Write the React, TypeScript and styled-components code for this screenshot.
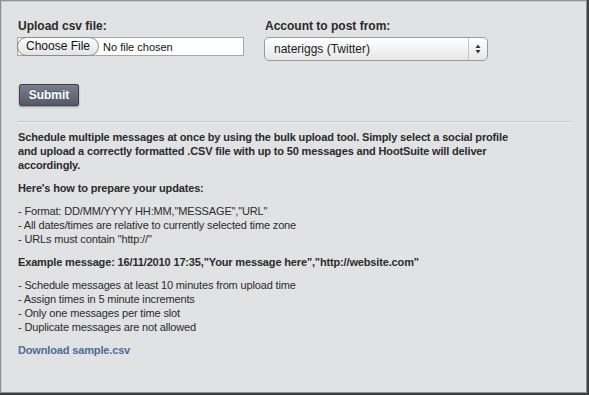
import React, { FC } from 'react';
import styled, { createGlobalStyle } from 'styled-components';

const GlobalStyle = createGlobalStyle`
  html, body {
    margin: 0;
    padding: 0;
    background: #3f3f41;
  }
  body {
    font-family: "Liberation Sans", Arial, Helvetica, sans-serif;
  }
`;

const Panel = styled.div`
  box-sizing: border-box;
  width: 587px;
  height: 393px;
  background: #e1e2e4;
  border: 1px solid #8f9092;
  box-shadow: inset 1px 1px 0 #c9cacc;
  padding: 17px 15px 0 16px;
  color: #2b2b2b;
`;

const FormRow = styled.div`
  display: flex;
  gap: 20px;
`;

const Field = styled.div`
  display: flex;
  flex-direction: column;
`;

const Label = styled.label`
  font-size: 12px;
  font-weight: bold;
  line-height: 16px;
  color: #2a2a2a;
  margin-bottom: 3px;
  margin-left: 1px;
`;

const FileBox = styled.div`
  box-sizing: border-box;
  width: 227px;
  height: 19px;
  display: flex;
  align-items: center;
  background: #fff;
  border: 1px solid #a6a6a6;
`;

const ChooseButton = styled.span`
  box-sizing: border-box;
  height: 19px;
  margin: -1px 0 0 -1px;
  padding: 0 8px;
  display: flex;
  align-items: center;
  border: 1px solid #8c8c8c;
  border-radius: 10px;
  background: linear-gradient(#fdfdfd, #e4e4e4);
  font-size: 12px;
  color: #111;
`;

const FileStatus = styled.span`
  font-size: 11px;
  color: #111;
  margin-left: 4px;
`;

const SelectBox = styled.div`
  box-sizing: border-box;
  width: 224px;
  height: 24px;
  display: flex;
  align-items: center;
  border: 1px solid #9a9a9a;
  border-radius: 5px;
  background: linear-gradient(#ffffff, #f1f1f1 60%, #e6e6e6);
  font-size: 12px;
  color: #1a1a1a;
`;

const SelectText = styled.span`
  flex: 1;
  padding-left: 9px;
`;

const SelectArrows = styled.span`
  width: 18px;
  height: 100%;
  border-left: 1px solid #c4c4c4;
  display: flex;
  align-items: center;
  justify-content: center;
`;

const SubmitButton = styled.button`
  margin: 23px 0 0 2px;
  width: 60px;
  height: 22px;
  border: 1px solid #3f4350;
  border-radius: 2px;
  background: linear-gradient(#7a7f8e, #555a69);
  box-shadow: 0 1px 2px rgba(0, 0, 0, 0.35);
  color: #fff;
  font-family: "Liberation Sans", Arial, sans-serif;
  font-weight: bold;
  font-size: 12px;
  padding: 0;
  text-shadow: 0 -1px 0 rgba(0, 0, 0, 0.3);
`;

const Divider = styled.hr`
  margin: 15px 0 0 0;
  border: none;
  border-top: 1px solid #c6c7c9;
  border-bottom: 1px solid #eeeff0;
  width: 555px;
`;

const Copy = styled.div`
  margin-top: 7px;
  margin-left: 1px;
  width: 505px;
  font-size: 11px;
  line-height: 14px;
  letter-spacing: -0.15px;
`;

const Para = styled.p<{ $bold?: boolean }>`
  margin: 0 0 9px 0;
  font-weight: ${(p) => (p.$bold ? 'bold' : 'normal')};
  color: #2b2b2b;
  white-space: ${(p) => (p.$bold ? 'normal' : 'nowrap')};
`;

const DownloadLink = styled.a`
  display: block;
  font-size: 11px;
  line-height: 14px;
  font-weight: bold;
  color: #4e6b95;
  text-decoration: none;
`;

const Arrows: FC = () => (
  <svg width="6" height="10" viewBox="0 0 6 10">
    <path d="M3 0.5 L5.5 4 H0.5 Z" fill="#333" />
    <path d="M3 9.5 L5.5 6 H0.5 Z" fill="#333" />
  </svg>
);

const App: FC = () => (
  <>
    <GlobalStyle />
    <Panel>
      <FormRow>
        <Field>
          <Label>Upload csv file:</Label>
          <FileBox>
            <ChooseButton>Choose File</ChooseButton>
            <FileStatus>No file chosen</FileStatus>
          </FileBox>
        </Field>
        <Field>
          <Label>Account to post from:</Label>
          <SelectBox>
            <SelectText>nateriggs (Twitter)</SelectText>
            <SelectArrows>
              <Arrows />
            </SelectArrows>
          </SelectBox>
        </Field>
      </FormRow>
      <SubmitButton>Submit</SubmitButton>
      <Divider />
      <Copy>
        <Para $bold>
          Schedule multiple messages at once by using the bulk upload tool. Simply select a social profile
          and upload a correctly formatted .CSV file with up to 50 messages and HootSuite will deliver
          accordingly.
        </Para>
        <Para $bold>Here's how to prepare your updates:</Para>
        <Para>
          - Format: DD/MM/YYYY HH:MM,"MESSAGE","URL"
          <br />- All dates/times are relative to currently selected time zone
          <br />- URLs must contain "http://"
        </Para>
        <Para $bold>Example message: 16/11/2010 17:35,"Your message here","http://website.com"</Para>
        <Para>
          - Schedule messages at least 10 minutes from upload time
          <br />- Assign times in 5 minute increments
          <br />- Only one messages per time slot
          <br />- Duplicate messages are not allowed
        </Para>
        <DownloadLink href="#">Download sample.csv</DownloadLink>
      </Copy>
    </Panel>
  </>
);

export default App;
